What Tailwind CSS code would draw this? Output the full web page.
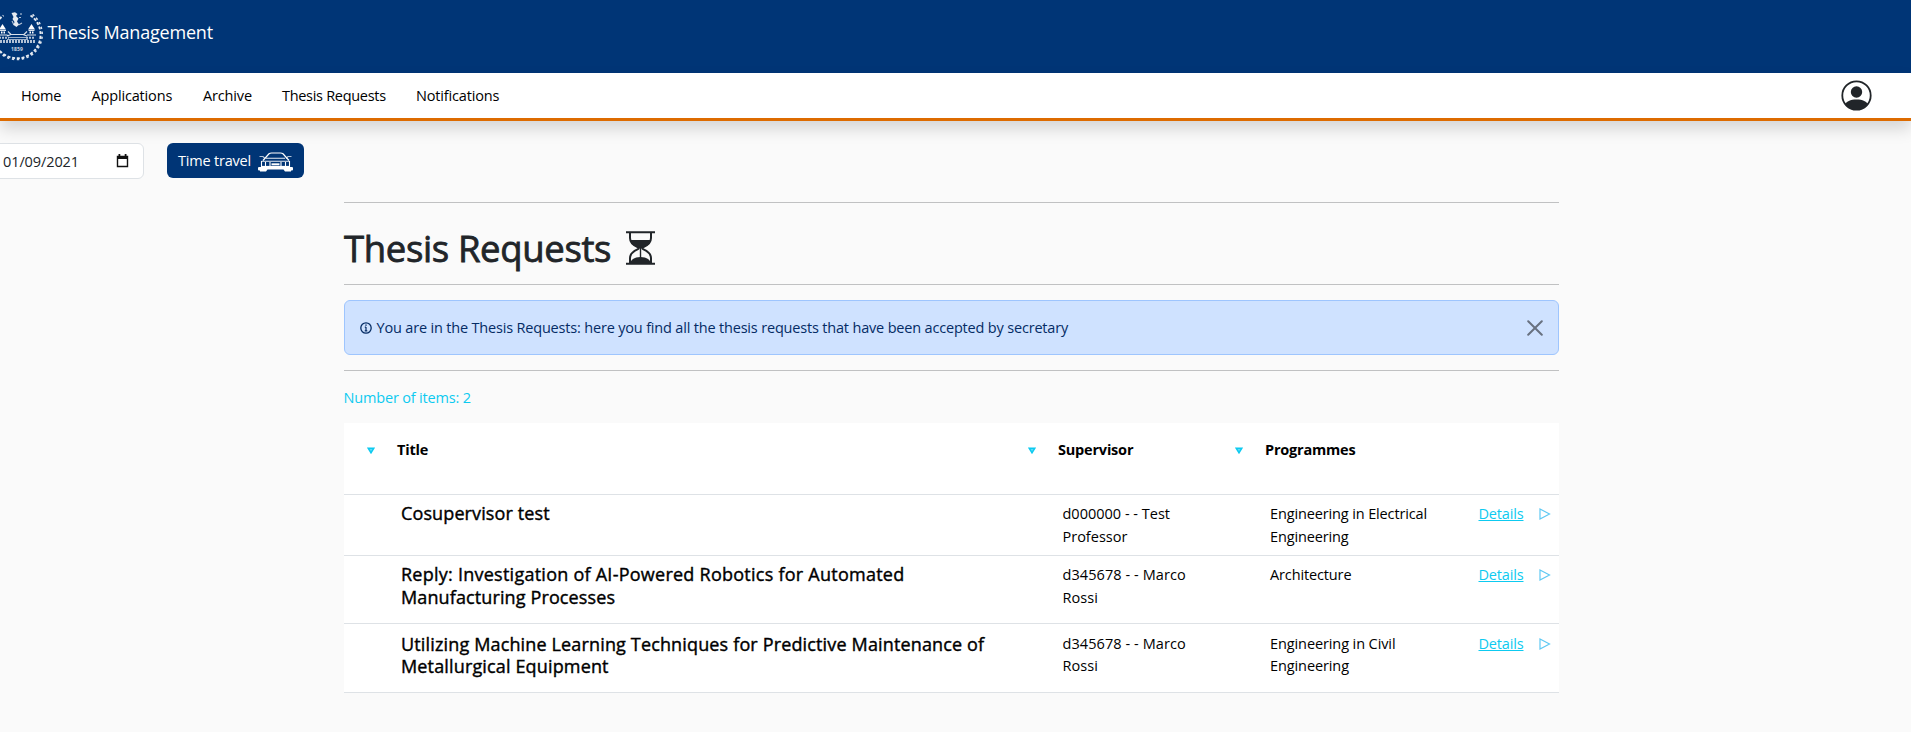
<!DOCTYPE html>
<html lang="en">
<head>
<meta charset="utf-8">
<title>Thesis Management</title>
<script src="https://cdn.jsdelivr.net/npm/@tailwindcss/browser@4"></script>
</head>
<body class="h-screen overflow-hidden bg-[#fafafa] font-['Open_Sans',sans-serif] text-[14.5px] leading-6 tracking-[-0.16px] text-black">

<header class="flex h-[73px] items-start bg-[#003576] text-white">
  <svg class="mt-[9px] -ml-[10px] h-[53px] w-[54px] shrink-0" viewBox="-10 9 54 53" fill="none" stroke="#fff">
    <path d="M30.500 15.500A23.500 23.500 0 1 1 3.500 15.500" stroke-width="1.800" stroke-dasharray="3 1.700" stroke-opacity=".9"/>
    <path d="M32.500 14.500A25.200 25.200 0 1 1 1.500 14.500" stroke-width="1.600" stroke-dasharray="2.400 2.600" stroke-opacity=".85"/>
    <path d="M11.500 13l3.500-.8 2.500 1.800-1.500 2 2.500 2.500-1.500 3 2 3-2.500 2.500-3-2 1-3-2-3 1-2z" fill="#fff" fill-opacity=".9" stroke="none"/>
    <path d="M18.500 25l3.500-2M21 13v2M19 17.500h2M12 21l2 4" stroke-width="1.100" stroke-opacity=".7"/>
    <path d="M-1 29.500l3.500-5.500 3.500 5.500zM28 29.500l3.500-5.500 3.500 5.500z" fill="#fff" stroke="none"/>
    <path d="M0 30.500h6M28.500 30.500h6M-2 35h9.500M27 35h9M8 31.500l3 3h13l3-3M7 36l4-1.500M27 36l-4-1.500" stroke-width="1.200" stroke-opacity=".85"/>
    <path d="M1 32.500h4M29.500 32.500h5" stroke-width="2" stroke-dasharray="1.500 1"/>
    <path d="M9 37.500h17M7 39.500h21" stroke-width="1.200" stroke-opacity=".6"/>
    <path d="M-4 37.800H9M26 37.800h9" stroke-width="2" stroke-dasharray="2 1" stroke-opacity=".7"/>
    <path d="M-3 41.500H36" stroke-width="3" stroke-dasharray="2 1" stroke-opacity=".7"/>
    <text x="17" y="51" text-anchor="middle" fill="#fff" stroke="none" font-size="5" letter-spacing="0.100" font-weight="700" fill-opacity=".8">1859</text>
  </svg>
  <h1 class="mt-[17px] ml-[3.5px] text-[18px] leading-[30px] tracking-[-0.2px]">Thesis Management</h1>
</header>

<nav class="relative flex h-[48px] items-center border-b-3 border-[#dd6b00] bg-white pl-[21px] shadow-[0_8px_16px_rgba(0,0,0,0.15)]">
  <a class="w-[70.500px]">Home</a>
  <a class="w-[111.500px]">Applications</a>
  <a class="w-[79px]">Archive</a>
  <a class="w-[134px] tracking-[-0.3px]">Thesis Requests</a>
  <a>Notifications</a>
  <svg class="mr-[39px] ml-auto size-[31px]" viewBox="0 0 31 31">
    <clipPath id="face"><circle cx="15.500" cy="15.500" r="14.500"/></clipPath>
    <circle cx="15.500" cy="15.500" r="14.200" fill="none" stroke="#212529" stroke-width="1.800"/>
    <circle cx="15.500" cy="12" r="5.700" fill="#212529"/>
    <path clip-path="url(#face)" d="M3.500 25c1.500-3.500 6-5.500 12-5.500s10.500 2 12 5.500v6h-24z" fill="#212529"/>
  </svg>
</nav>

<section class="flex pt-[22px]">
  <div class="-ml-3 flex h-[36px] w-[156px] items-center justify-between rounded-md border border-[#dee2e6] bg-white pr-[14px] pl-[14px] text-[#212529]">
    <span class="mt-px tracking-[-0.1px]">01/09/2021</span>
    <svg class="h-[14px] w-[13px]" viewBox="0 0 13 14"><path d="M1.500 2.500h10v10h-10z" fill="none" stroke="#111" stroke-width="1.400"/><path d="M1 2h11v3H1zM2.500 0h1.800v3H2.500zM8.700 0h1.800v3H8.700z" fill="#111"/></svg>
  </div>
  <button class="ml-[23px] flex h-[35px] w-[137px] items-center justify-between rounded-md bg-[#003576] pr-[11px] pl-[11px] tracking-[-0.2px] text-white">
    <span>Time travel</span>
    <svg class="mt-[2px] h-[20px] w-[35px]" viewBox="0 0 35 20" fill="none" stroke="#fff">
      <path d="M5 8.500L11 1.800Q12 1 13.500 1h9Q24 1 25 1.800L31 8.500" stroke-width="1.200"/>
      <path d="M8 6.200h19M3.500 9.200h28" stroke-width="1.100" stroke-opacity=".9"/>
      <path d="M1.500 4.500h3.500l2 2M33.500 4.500H30l-2 2" stroke-width="1.200" stroke-opacity=".7"/>
      <path d="M3.500 9v6.500M31.500 9v6.500M12 10v4M23 10v4M7.500 10v4M27.500 10v4" stroke-width="1.100"/>
      <path d="M3 14.500h29" stroke-width="1.200"/>
      <path d="M13.500 12.300h8" stroke-width="2"/>
      <path d="M1 15h33q1 0 1 1v1.500q0 1-1 1h-1v1h-6l-1.500-2h-16L8 19.500H2v-1H1q-1 0-1-1V16q0-1 1-1z" fill="#fff" stroke="none"/>
    </svg>
  </button>
</section>

<main class="ml-[344px] w-[1215px] pt-[23px]">
  <hr class="border-[#c0c1c2]">
  <div class="flex h-[81px] items-start pt-[21px] text-[#212529]">
    <h2 class="w-[282px] text-[36.5px] leading-[48px] tracking-[-0.36px] whitespace-nowrap [-webkit-text-stroke:0.8px_#212529]">Thesis Requests</h2>
    <svg class="mt-[7px] h-[34px] w-[29px]" viewBox="0 0 29 34" fill="none" stroke="#212529">
      <path d="M0 1.200h29M0 32.800h29" stroke-width="1.900"/>
      <path d="M4 2v5c0 5 4 7.500 7.500 9 1.500.6 1.500 1.800 0 2.400C8 20 4 22.500 4 27v5M25 2v5c0 5-4 7.500-7.500 9-1.500.6-1.500 1.800 0 2.400C21 20 25 22.500 25 27v5" stroke-width="2"/>
      <path d="M4 9h21c-.8 4-4.500 6-7.500 7.400-1 .5-1.700 1.200-2.200 1.200h-1.600c-.5 0-1.200-.7-2.200-1.200C8.500 15 4.800 13 4 9z" fill="#212529" stroke="none"/>
      <path d="M14.500 17v10" stroke-width="1.400"/>
      <path d="M4 33c.5-4 4-7 10.500-7s10 3 10.500 7z" fill="#212529" stroke="none"/>
    </svg>
  </div>
  <hr class="border-[#c0c1c2]">
  <div class="mt-[15px] flex h-[55px] items-center rounded-md border border-[#9ec5fe] bg-[#cfe2ff] pl-[15px] text-[#052c65]">
    <svg class="size-[12px]" viewBox="0 0 12 12" fill="none" stroke="#052c65"><circle cx="6" cy="6" r="5.200" stroke-width="1.300"/><path d="M6 5v4M4.800 5.200H6M4.700 8.800h2.600M5.300 3.200h1.400" stroke-width="1.200"/></svg>
    <p class="mt-px ml-[4.5px] tracking-[-0.18px]">You are in the Thesis Requests: here you find all the thesis requests that have been accepted by secretary</p>
    <svg class="mr-[15px] ml-auto size-[16px]" viewBox="0 0 16 16" stroke="#687180" stroke-width="2" stroke-linecap="round"><path d="M1.200 1.200l13.600 13.600M14.800 1.200L1.200 14.800"/></svg>
  </div>
  <hr class="mt-[15px] border-[#c0c1c2]">
  <p class="mt-[15px] -ml-[0.5px] tracking-[-0.17px] text-[#0dcaf0]">Number of items: 2</p>

  <div class="mt-[13px] bg-white">
    <div class="grid h-[72px] grid-cols-[661px_207px_1fr] border-b border-[#dee2e6] pt-[15px] pl-[22.5px] font-bold tracking-[-0.2px]">
      <div class="flex items-center gap-[22.5px] self-start"><svg class="h-[7px] w-[8px]" viewBox="0 0 8 7"><path d="M1.200 1.200h5.600L4 5.800z" fill="#5fdcf6" stroke="#0dcaf0" stroke-width="1.500"/></svg>Title</div>
      <div class="flex items-center gap-[22.5px] self-start"><svg class="h-[7px] w-[8px]" viewBox="0 0 8 7"><path d="M1.200 1.200h5.600L4 5.800z" fill="#5fdcf6" stroke="#0dcaf0" stroke-width="1.500"/></svg>Supervisor</div>
      <div class="flex items-center gap-[22.5px] self-start"><svg class="h-[7px] w-[8px]" viewBox="0 0 8 7"><path d="M1.200 1.200h5.600L4 5.800z" fill="#5fdcf6" stroke="#0dcaf0" stroke-width="1.500"/></svg>Programmes</div>
    </div>

    <div class="grid h-[61px] grid-cols-[661px_207.5px_208.5px_60px_1fr] border-b border-[#dee2e6] pt-[7px] pl-[57.5px] leading-[23px]">
      <h3 class="-ml-[0.5px] text-[18px] tracking-[0.12px] [-webkit-text-stroke:0.4px_#000]">Cosupervisor test</h3>
      <p class="tracking-[0px]">d000000 - - Test<br>Professor</p>
      <p class="tracking-[-0.13px]">Engineering in Electrical<br>Engineering</p>
      <a class="text-[#0dcaf0] underline">Details</a>
      <svg class="mt-[6px] h-[12px] w-[12px]" viewBox="0 0 12 12"><path d="M1 1l9.500 5L1 11z" fill="none" stroke="#5fc9f3" stroke-width="1.200"/></svg>
    </div>

    <div class="grid h-[68px] grid-cols-[661px_207.5px_208.5px_60px_1fr] border-b border-[#dee2e6] pt-[7px] pl-[57.5px] leading-[23px]">
      <h3 class="-ml-[0.5px] text-[18px] tracking-[0.25px] [-webkit-text-stroke:0.4px_#000]">Reply: Investigation of AI-Powered Robotics for Automated<br><span class="tracking-[0.12px]">Manufacturing Processes</span></h3>
      <p class="tracking-[0.08px]">d345678 - - Marco<br>Rossi</p>
      <p class="tracking-[-0.13px]">Architecture</p>
      <a class="text-[#0dcaf0] underline">Details</a>
      <svg class="mt-[6px] h-[12px] w-[12px]" viewBox="0 0 12 12"><path d="M1 1l9.500 5L1 11z" fill="none" stroke="#5fc9f3" stroke-width="1.200"/></svg>
    </div>

    <div class="grid h-[69px] grid-cols-[661px_207.5px_208.5px_60px_1fr] border-b border-[#dee2e6] pt-[9px] pl-[57.5px] leading-[22px]">
      <h3 class="-ml-[0.5px] text-[18px] tracking-[0.15px] [-webkit-text-stroke:0.4px_#000]">Utilizing Machine Learning Techniques for Predictive Maintenance of<br>Metallurgical Equipment</h3>
      <p class="tracking-[0.08px]">d345678 - - Marco<br>Rossi</p>
      <p class="tracking-[-0.1px]">Engineering in Civil<br>Engineering</p>
      <a class="text-[#0dcaf0] underline">Details</a>
      <svg class="mt-[5px] h-[12px] w-[12px]" viewBox="0 0 12 12"><path d="M1 1l9.500 5L1 11z" fill="none" stroke="#5fc9f3" stroke-width="1.200"/></svg>
    </div>
  </div>
</main>
</body>
</html>
